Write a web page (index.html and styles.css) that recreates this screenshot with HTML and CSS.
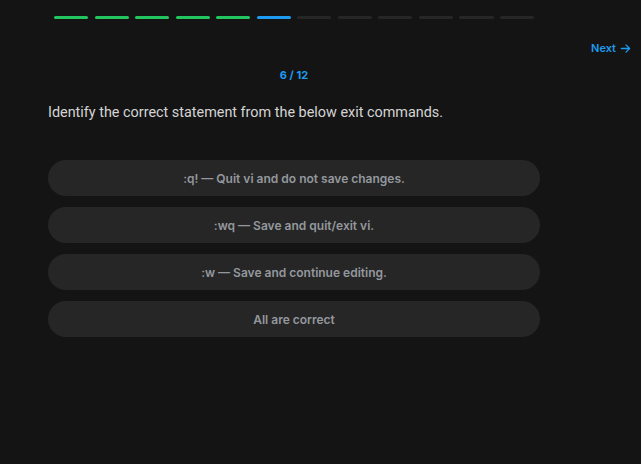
FILE: index.html
```html
<!DOCTYPE html>
<html>
<head>
<meta charset="utf-8">
<link rel="stylesheet" href="styles.css">
</head>
<body>
<div class="page">
  <div class="progress">
    <span class="seg done"></span><span class="seg done"></span><span class="seg done"></span><span class="seg done"></span><span class="seg done"></span><span class="seg current"></span><span class="seg"></span><span class="seg"></span><span class="seg"></span><span class="seg"></span><span class="seg"></span><span class="seg"></span>
  </div>
  <div class="nav">
    <a class="next">Next <svg width="11" height="11" viewBox="0 0 12 12" fill="none" stroke="currentColor" stroke-width="1.4" stroke-linecap="round" stroke-linejoin="round"><path d="M1.5 6h9M6.5 2l4 4-4 4"/></svg></a>
  </div>
  <div class="main">
    <div class="counter">6 / 12</div>
    <div class="question">Identify the correct statement from the below exit commands.</div>
    <div class="options">
      <div class="option">:q! — Quit vi and do not save changes.</div>
      <div class="option">:wq — Save and quit/exit vi.</div>
      <div class="option">:w — Save and continue editing.</div>
      <div class="option">All are correct</div>
    </div>
  </div>
</div>
</body>
</html>
```
FILE: styles.css
```css
html, body {
  margin: 0;
  padding: 0;
  background: #141414;
  font-family: Inter, "Noto Sans", sans-serif;
}
.page {
  width: 641px;
  height: 464px;
}
.progress {
  display: flex;
  gap: 6.5px;
  width: 480px;
  margin-left: 54px;
  padding-top: 16px;
}
.seg {
  flex: 1;
  height: 3px;
  border-radius: 2px;
  background: #262626;
}
.seg.done { background: #22c55e; }
.seg.current { background: #1d9bf0; }
.nav {
  display: flex;
  justify-content: flex-end;
  padding-right: 10px;
  margin-top: 22px;
}
.next {
  display: flex;
  align-items: center;
  gap: 4px;
  color: #1d9bf0;
  font-size: 11px;
  font-weight: 600;
  line-height: 14px;
}
.main {
  width: 492px;
  margin-left: 48px;
}
.counter {
  text-align: center;
  color: #1d9bf0;
  font-size: 11px;
  font-weight: 700;
  line-height: 14px;
  margin-top: 13px;
}
.question {
  font-family: Roboto, "Liberation Sans", sans-serif;
  color: #d4d4d4;
  font-size: 14.4px;
  line-height: 20px;
  margin-top: 21px;
}
.options {
  display: flex;
  flex-direction: column;
  gap: 11px;
  margin-top: 37px;
}
.option {
  height: 36px;
  border-radius: 18px;
  background: #262626;
  color: #94989e;
  font-size: 12px;
  font-weight: 600;
  display: flex;
  align-items: center;
  justify-content: center;
}
```
